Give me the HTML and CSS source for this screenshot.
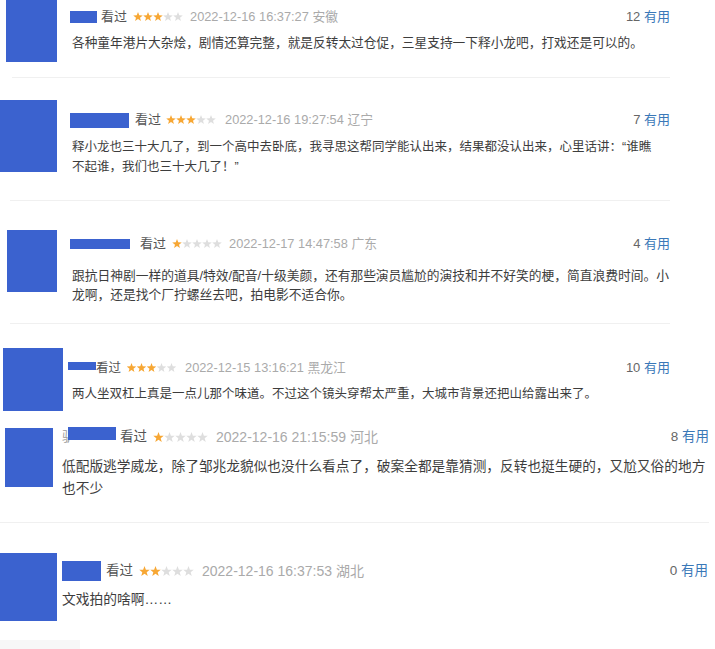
FILE: index.html
```html
<!DOCTYPE html>
<html lang="zh-CN">
<head>
<meta charset="utf-8">
<title>短评</title>
<link rel="stylesheet" href="styles.css">
</head>
<body>
<svg class="defs" width="0" height="0" aria-hidden="true">
  <symbol id="star" viewBox="0 0 10 10">
    <path d="M5 0 L6.25 3.3 L9.76 3.46 L7 5.65 L7.94 9.05 L5 7.1 L2.06 9.05 L3 5.65 L0.24 3.46 L3.75 3.3Z"/>
  </symbol>
</svg>

<div class="list">
  <div class="review r1">
    <div class="avatar"></div>
    <div class="main">
      <div class="meta">
        <span class="mask"></span>
        <span class="watched">看过</span>
        <svg class="stars" viewBox="0 0 50 10"><use href="#star" x="0" width="10" height="10" class="on"/><use href="#star" x="10" width="10" height="10" class="on"/><use href="#star" x="20" width="10" height="10" class="on"/><use href="#star" x="30" width="10" height="10" class="off"/><use href="#star" x="40" width="10" height="10" class="off"/></svg>
        <span class="time">2022-12-16 16:37:27 安徽</span>
        <span class="votes"><span class="num">12</span> <span class="useful">有用</span></span>
      </div>
      <p class="text">各种童年港片大杂烩，剧情还算完整，就是反转太过仓促，三星支持一下释小龙吧，打戏还是可以的。</p>
    </div>
  </div>
  <div class="rule rule1"></div>

  <div class="review r2">
    <div class="avatar"></div>
    <div class="main">
      <div class="meta">
        <span class="mask"></span>
        <span class="watched">看过</span>
        <svg class="stars" viewBox="0 0 50 10"><use href="#star" x="0" width="10" height="10" class="on"/><use href="#star" x="10" width="10" height="10" class="on"/><use href="#star" x="20" width="10" height="10" class="on"/><use href="#star" x="30" width="10" height="10" class="off"/><use href="#star" x="40" width="10" height="10" class="off"/></svg>
        <span class="time">2022-12-16 19:27:54 辽宁</span>
        <span class="votes"><span class="num">7</span> <span class="useful">有用</span></span>
      </div>
      <p class="text">释小龙也三十大几了，到一个高中去卧底，我寻思这帮同学能认出来，结果都没认出来，心里话讲：“谁瞧不起谁，我们也三十大几了！”</p>
    </div>
  </div>
  <div class="rule rule2"></div>

  <div class="review r3">
    <div class="avatar"></div>
    <div class="main">
      <div class="meta">
        <span class="mask"></span>
        <span class="watched">看过</span>
        <svg class="stars" viewBox="0 0 50 10"><use href="#star" x="0" width="10" height="10" class="on"/><use href="#star" x="10" width="10" height="10" class="off"/><use href="#star" x="20" width="10" height="10" class="off"/><use href="#star" x="30" width="10" height="10" class="off"/><use href="#star" x="40" width="10" height="10" class="off"/></svg>
        <span class="time">2022-12-17 14:47:58 广东</span>
        <span class="votes"><span class="num">4</span> <span class="useful">有用</span></span>
      </div>
      <p class="text">跟抗日神剧一样的道具/特效/配音/十级美颜，还有那些演员尴尬的演技和并不好笑的梗，简直浪费时间。小龙啊，还是找个厂拧螺丝去吧，拍电影不适合你。</p>
    </div>
  </div>
  <div class="rule rule3"></div>

  <div class="review r4">
    <div class="avatar"></div>
    <div class="main">
      <div class="meta">
        <span class="mask"></span>
        <span class="watched">看过</span>
        <svg class="stars" viewBox="0 0 50 10"><use href="#star" x="0" width="10" height="10" class="on"/><use href="#star" x="10" width="10" height="10" class="on"/><use href="#star" x="20" width="10" height="10" class="on"/><use href="#star" x="30" width="10" height="10" class="off"/><use href="#star" x="40" width="10" height="10" class="off"/></svg>
        <span class="time">2022-12-15 13:16:21 黑龙江</span>
        <span class="votes"><span class="num">10</span> <span class="useful">有用</span></span>
      </div>
      <p class="text">两人坐双杠上真是一点儿那个味道。不过这个镜头穿帮太严重，大城市背景还把山给露出来了。</p>
    </div>
  </div>

  <div class="review r5">
    <div class="avatar"></div>
    <div class="main">
      <div class="meta">
        <span class="peek">驴</span><span class="mask"></span>
        <span class="watched">看过</span>
        <svg class="stars" viewBox="0 0 50 10"><use href="#star" x="0" width="10" height="10" class="on"/><use href="#star" x="10" width="10" height="10" class="off"/><use href="#star" x="20" width="10" height="10" class="off"/><use href="#star" x="30" width="10" height="10" class="off"/><use href="#star" x="40" width="10" height="10" class="off"/></svg>
        <span class="time">2022-12-16 21:15:59 河北</span>
        <span class="votes"><span class="num">8</span> <span class="useful">有用</span></span>
      </div>
      <p class="text">低配版逃学威龙，除了邹兆龙貌似也没什么看点了，破案全都是靠猜测，反转也挺生硬的，又尬又俗的地方也不少</p>
    </div>
  </div>
  <div class="rule rule5"></div>

  <div class="review r6">
    <div class="avatar"></div>
    <div class="main">
      <div class="meta">
        <span class="mask"></span>
        <span class="watched">看过</span>
        <svg class="stars" viewBox="0 0 50 10"><use href="#star" x="0" width="10" height="10" class="on"/><use href="#star" x="10" width="10" height="10" class="on"/><use href="#star" x="20" width="10" height="10" class="off"/><use href="#star" x="30" width="10" height="10" class="off"/><use href="#star" x="40" width="10" height="10" class="off"/></svg>
        <span class="time">2022-12-16 16:37:53 湖北</span>
        <span class="votes"><span class="num">0</span> <span class="useful">有用</span></span>
      </div>
      <p class="text">文戏拍的啥啊……</p>
    </div>
  </div>
  <div class="tail"></div>
</div>
</body>
</html>
```

FILE: styles.css
```css
* { box-sizing: border-box; }

html, body {
  margin: 0;
  padding: 0;
  background: #ffffff;
}

body {
  width: 715px;
  height: 649px;
  overflow: hidden;
  font-family: "Liberation Sans", "Noto Sans CJK SC", sans-serif;
  color: #444444;
}

.defs { position: absolute; width: 0; height: 0; }

.list { display: flex; flex-direction: column; }

.review {
  display: flex;
  align-items: flex-start;
}

.avatar {
  flex: none;
  background: #3b62cf;
}

.main {
  flex: none;
  display: flex;
  flex-direction: column;
}

.meta {
  display: flex;
  align-items: center;
  height: 20px;
  line-height: 20px;
  font-size: 13px;
  white-space: nowrap;
}

.mask {
  flex: none;
  background: #3b62cf;
}

.peek {
  flex: none;
  color: #9a9a9a;
  font-size: 13px;
}

.watched { color: #555555; }

.stars {
  flex: none;
  height: 10px;
}
.stars .on { fill: #f7a734; }
.stars .off { fill: #dedede; }

.time { color: #aaaaaa; }

.votes { margin-left: auto; color: #666666; }
.useful { color: #3a78b8; }

.text {
  margin: 0;
  color: #3d3d3d;
  font-size: 12.5px;
  line-height: 20px;
}

.rule {
  height: 1px;
  background: #f0f0f0;
}

/* block 1 */
.r1 .avatar { margin-left: 6px; width: 51px; height: 62px; }
.r1 .main { margin-left: 13px; width: 600px; }
.r1 .meta { margin-top: 7px; }
.r1 .mask { width: 27px; height: 12px; margin-right: 4px; }
.r1 .stars { width: 52px; margin: 0 6px 0 5px; }
.r1 .time { font-size: 12.8px; }
.r1 .text { margin-top: 6px; padding-left: 2px; font-size: 12.7px; }
.rule1 { margin: 15px 0 0 12px; width: 658px; }

/* block 2 */
.r2 { margin-top: 22px; }
.r2 .avatar { width: 57px; height: 72px; }
.r2 .main { margin-left: 13px; width: 600px; }
.r2 .meta { margin-top: 10px; }
.r2 .mask { width: 59px; height: 15px; margin-right: 6px; }
.r2 .stars { width: 52px; margin: 0 8px 0 4px; }
.r2 .time { font-size: 12.8px; }
.r2 .text { margin-top: 7px; padding-left: 2px; padding-right: 10px; }
.rule2 { margin: 23px 0 0 10px; width: 660px; }

/* block 3 */
.r3 { margin-top: 29px; }
.r3 .avatar { margin-left: 7px; width: 50px; height: 62px; }
.r3 .main { margin-left: 13px; width: 600px; }
.r3 .meta { margin-top: 4px; }
.r3 .mask { width: 60px; height: 10px; margin-right: 10px; }
.r3 .stars { width: 52px; margin: 0 6px 0 5px; }
.r3 .time { font-size: 12.8px; }
.r3 .text { margin-top: 12px; padding-left: 2px; font-size: 12.75px; line-height: 19px; }
.rule3 { margin: 19px 0 0 10px; width: 660px; }

/* block 4 */
.r4 { margin-top: 24px; }
.r4 .avatar { margin-left: 3px; width: 60px; height: 63px; }
.r4 .main { margin-left: 5px; width: 602px; }
.r4 .meta { margin-top: 10px; font-size: 12.5px; }
.r4 .mask { width: 28px; height: 8px; margin-top: -4px; }
.r4 .stars { width: 53px; margin: 0 7px 0 4px; }
.r4 .time { font-size: 12.8px; }
.r4 .votes { font-size: 13px; }
.r4 .text { margin-top: 6px; padding-left: 4px; }

/* block 5 */
.r5 { margin-top: 16px; }
.r5 .avatar { margin-left: 5px; margin-top: 1px; width: 48px; height: 59px; }
.r5 .main { margin-left: 9px; width: 647px; }
.r5 .meta { font-size: 13.5px; }
.r5 .mask { width: 48px; height: 13px; margin: -7px 4px 0 -7px; }
.r5 .stars { width: 57px; height: 11px; margin: 0 7px 0 5px; }
.r5 .time { font-size: 14px; }
.r5 .text { margin-top: 9px; font-size: 13.7px; line-height: 22px; }
.rule5 { margin: 22px 0 0 0; width: 709px; }

/* block 6 */
.r6 { margin-top: 30px; }
.r6 .avatar { width: 57px; height: 68px; }
.r6 .main { margin-left: 5px; width: 646px; }
.r6 .meta { margin-top: 8px; font-size: 13.5px; }
.r6 .mask { width: 39px; height: 20px; margin-right: 5px; }
.r6 .stars { width: 57px; height: 11px; margin: 0 7px 0 5px; }
.r6 .time { font-size: 14px; }
.r6 .text { margin-top: 8px; font-size: 13.75px; line-height: 22px; }

.tail {
  margin-top: 19px;
  width: 80px;
  height: 9px;
  background: #f7f7f7;
}
```
